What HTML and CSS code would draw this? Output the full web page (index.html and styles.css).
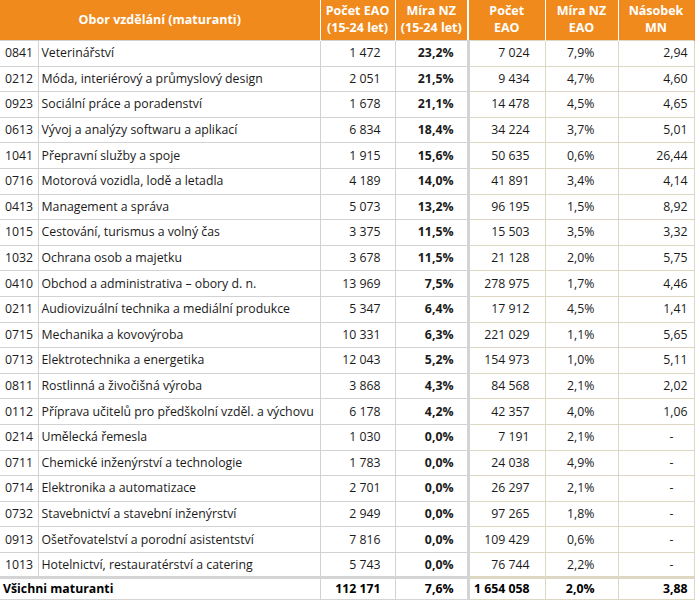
FILE: index.html
```html
<!DOCTYPE html>
<html lang="cs">
<head>
<meta charset="utf-8">
<title>Obor vzdělání (maturanti)</title>
<link rel="stylesheet" href="styles.css">
</head>
<body>
<table class="tbl">
<colgroup>
<col class="c-code"><col class="c-name"><col class="c-cnt"><col class="c-rate"><col class="c-eao"><col class="c-nz"><col class="c-mn">
</colgroup>
<thead>
<tr>
<th colspan="2">Obor vzdělání (maturanti)</th>
<th>Počet EAO<br>(15-24 let)</th>
<th class="sep">Míra NZ<br>(15-24 let)</th>
<th>Počet<br>EAO</th>
<th>Míra NZ<br>EAO</th>
<th>Násobek<br>MN</th>
</tr>
</thead>
<tbody>
<tr><td class="code">0841</td><td class="name">Veterinářství</td><td class="cnt">1 472</td><td class="rate sep">23,2%</td><td class="eao r">7 024</td><td class="nz r">7,9%</td><td class="mn r">2,94</td></tr>
<tr><td class="code">0212</td><td class="name">Móda, interiérový a průmyslový design</td><td class="cnt">2 051</td><td class="rate sep">21,5%</td><td class="eao r">9 434</td><td class="nz r">4,7%</td><td class="mn r">4,60</td></tr>
<tr><td class="code">0923</td><td class="name">Sociální práce a poradenství</td><td class="cnt">1 678</td><td class="rate sep">21,1%</td><td class="eao r">14 478</td><td class="nz r">4,5%</td><td class="mn r">4,65</td></tr>
<tr><td class="code">0613</td><td class="name">Vývoj a analýzy softwaru a aplikací</td><td class="cnt">6 834</td><td class="rate sep">18,4%</td><td class="eao r">34 224</td><td class="nz r">3,7%</td><td class="mn r">5,01</td></tr>
<tr><td class="code">1041</td><td class="name">Přepravní služby a spoje</td><td class="cnt">1 915</td><td class="rate sep">15,6%</td><td class="eao r">50 635</td><td class="nz r">0,6%</td><td class="mn r">26,44</td></tr>
<tr><td class="code">0716</td><td class="name">Motorová vozidla, lodě a letadla</td><td class="cnt">4 189</td><td class="rate sep">14,0%</td><td class="eao r">41 891</td><td class="nz r">3,4%</td><td class="mn r">4,14</td></tr>
<tr><td class="code">0413</td><td class="name">Management a správa</td><td class="cnt">5 073</td><td class="rate sep">13,2%</td><td class="eao r">96 195</td><td class="nz r">1,5%</td><td class="mn r">8,92</td></tr>
<tr><td class="code">1015</td><td class="name">Cestování, turismus a volný čas</td><td class="cnt">3 375</td><td class="rate sep">11,5%</td><td class="eao r">15 503</td><td class="nz r">3,5%</td><td class="mn r">3,32</td></tr>
<tr><td class="code">1032</td><td class="name">Ochrana osob a majetku</td><td class="cnt">3 678</td><td class="rate sep">11,5%</td><td class="eao r">21 128</td><td class="nz r">2,0%</td><td class="mn r">5,75</td></tr>
<tr><td class="code">0410</td><td class="name">Obchod a administrativa – obory d. n.</td><td class="cnt">13 969</td><td class="rate sep">7,5%</td><td class="eao r">278 975</td><td class="nz r">1,7%</td><td class="mn r">4,46</td></tr>
<tr><td class="code">0211</td><td class="name">Audiovizuální technika a mediální produkce</td><td class="cnt">5 347</td><td class="rate sep">6,4%</td><td class="eao r">17 912</td><td class="nz r">4,5%</td><td class="mn r">1,41</td></tr>
<tr><td class="code">0715</td><td class="name">Mechanika a kovovýroba</td><td class="cnt">10 331</td><td class="rate sep">6,3%</td><td class="eao r">221 029</td><td class="nz r">1,1%</td><td class="mn r">5,65</td></tr>
<tr><td class="code">0713</td><td class="name">Elektrotechnika a energetika</td><td class="cnt">12 043</td><td class="rate sep">5,2%</td><td class="eao r">154 973</td><td class="nz r">1,0%</td><td class="mn r">5,11</td></tr>
<tr><td class="code">0811</td><td class="name">Rostlinná a živočišná výroba</td><td class="cnt">3 868</td><td class="rate sep">4,3%</td><td class="eao r">84 568</td><td class="nz r">2,1%</td><td class="mn r">2,02</td></tr>
<tr><td class="code">0112</td><td class="name">Příprava učitelů pro předškolní vzděl. a výchovu</td><td class="cnt">6 178</td><td class="rate sep">4,2%</td><td class="eao r">42 357</td><td class="nz r">4,0%</td><td class="mn r">1,06</td></tr>
<tr><td class="code">0214</td><td class="name">Umělecká řemesla</td><td class="cnt">1 030</td><td class="rate sep">0,0%</td><td class="eao r">7 191</td><td class="nz r">2,1%</td><td class="mn r dash">-</td></tr>
<tr><td class="code">0711</td><td class="name">Chemické inženýrství a technologie</td><td class="cnt">1 783</td><td class="rate sep">0,0%</td><td class="eao r">24 038</td><td class="nz r">4,9%</td><td class="mn r dash">-</td></tr>
<tr><td class="code">0714</td><td class="name">Elektronika a automatizace</td><td class="cnt">2 701</td><td class="rate sep">0,0%</td><td class="eao r">26 297</td><td class="nz r">2,1%</td><td class="mn r dash">-</td></tr>
<tr><td class="code">0732</td><td class="name">Stavebnictví a stavební inženýrství</td><td class="cnt">2 949</td><td class="rate sep">0,0%</td><td class="eao r">97 265</td><td class="nz r">1,8%</td><td class="mn r dash">-</td></tr>
<tr><td class="code">0913</td><td class="name">Ošetřovatelství a porodní asistentství</td><td class="cnt">7 816</td><td class="rate sep">0,0%</td><td class="eao r">109 429</td><td class="nz r">0,6%</td><td class="mn r dash">-</td></tr>
<tr><td class="code">1013</td><td class="name">Hotelnictví, restauratérství a catering</td><td class="cnt">5 743</td><td class="rate sep">0,0%</td><td class="eao r">76 744</td><td class="nz r">2,2%</td><td class="mn r dash">-</td></tr>
</tbody>
<tfoot>
<tr><td class="tot-name" colspan="2">Všichni maturanti</td><td class="cnt">112 171</td><td class="rate sep">7,6%</td><td class="eao r">1 654 058</td><td class="nz r">2,0%</td><td class="mn r">3,88</td></tr>
</tfoot>
</table>
</body>
</html>
```

FILE: styles.css
```css
html, body {
  margin: 0;
  padding: 0;
  background: #ffffff;
}

.tbl {
  border-collapse: collapse;
  table-layout: fixed;
  width: 694px;
  font-family: "Open Sans", "Noto Sans", sans-serif;
  font-size: 12.3px;
  color: #1a1a1a;
}

.c-code { width: 38px; }
.c-name { width: 282px; }
.c-cnt { width: 75px; }
.c-rate { width: 73px; }
.c-eao { width: 77px; }
.c-nz { width: 73px; }
.c-mn { width: 76px; }

.tbl th {
  background: #f18a1c;
  color: #ffffff;
  font-weight: 700;
  font-size: 12.5px;
  line-height: 17px;
  height: 38px;
  padding: 0 2px 2px;
  text-align: center;
  vertical-align: middle;
  border-left: 1px solid #ffffff;
  border-right: 1px solid #ffffff;
}

.tbl th:first-child { border-left: none; }
.tbl th:last-child { border-right: 1px solid #f18a1c; }
.tbl th.sep { border-right: 2px solid #ffffff; }

.tbl td {
  height: 25.6px;
  box-sizing: border-box;
  padding: 0;
  line-height: 16px;
  border: 1px solid #d2d2d2;
  white-space: nowrap;
  overflow: hidden;
  vertical-align: middle;
}

.tbl td.code {
  padding-left: 5px;
  border-left: none;
}

.tbl td.name {
  padding-left: 3px;
  overflow: visible;
}

.tbl td.cnt {
  text-align: right;
  padding-right: 14px;
}

.tbl td.rate {
  text-align: right;
  padding-right: 13px;
  font-weight: 700;
}

.tbl td.sep {
  border-right: 3px solid #d4d4d4;
}

.tbl td.r {
  border-color: #dcd8c4;
  text-align: right;
}

.tbl td.eao { padding-right: 15px; }
.tbl td.nz { padding-right: 23px; }
.tbl td.mn { padding-right: 6px; }
.tbl td.dash { padding-right: 20px; }

.tbl tfoot td {
  height: 22px;
  padding-bottom: 1px;
  font-weight: 700;
  color: #000000;
  border-top: 3px solid #d4d4d4;
  border-bottom: 2px solid #d4d4d4;
}

.tbl td.tot-name {
  padding-left: 3px;
  border-left: none;
}
```
